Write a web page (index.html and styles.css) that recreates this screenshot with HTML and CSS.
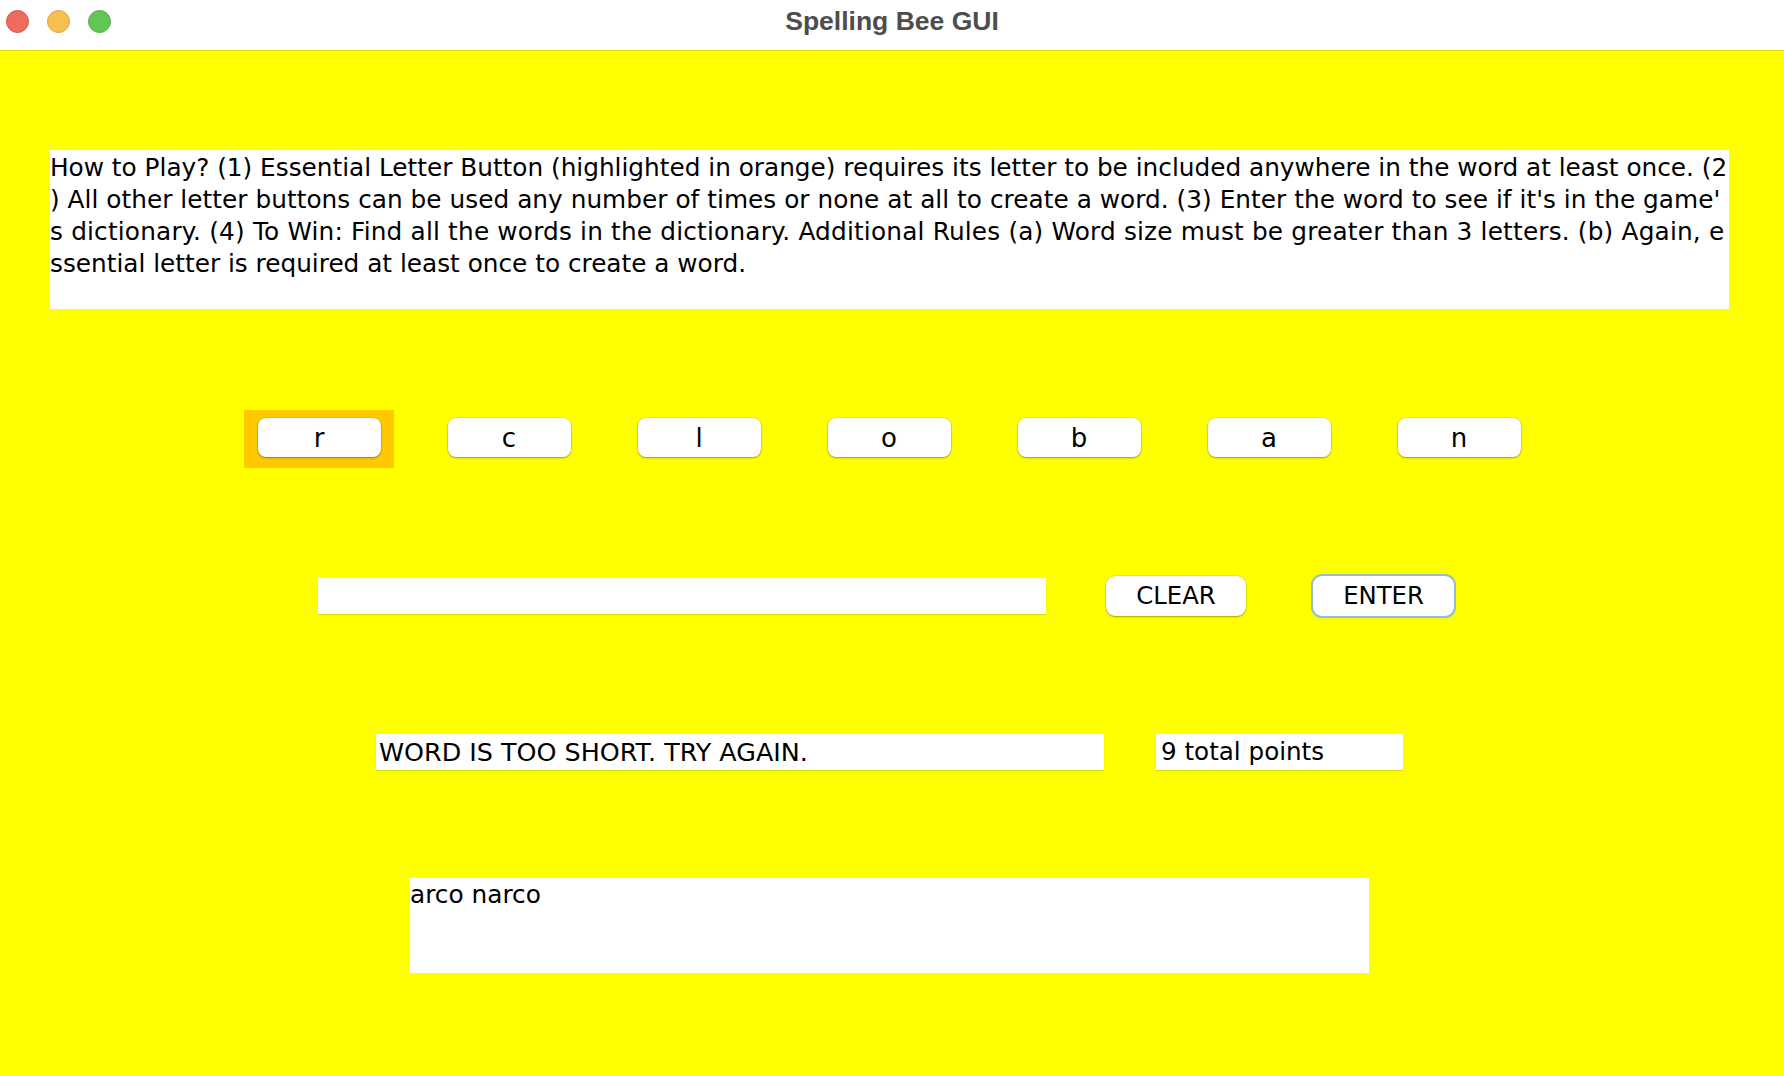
FILE: index.html
```html
<!DOCTYPE html>
<html lang="en">
<head>
<meta charset="utf-8">
<title>Spelling Bee GUI</title>
<link rel="stylesheet" href="styles.css">
</head>
<body>
<div class="window">
  <header class="titlebar">
    <div class="lights">
      <span class="light red"></span>
      <span class="light amber"></span>
      <span class="light green"></span>
    </div>
    <div class="title">Spelling Bee GUI</div>
    <div class="spacer"></div>
  </header>
  <main class="content">
    <div class="instructions">
      <div class="line">How to Play? (1) Essential Letter Button (highlighted in orange) requires its letter to be included anywhere in the word at least once. (2</div>
      <div class="line line-two">) All other letter buttons can be used any number of times or none at all to create a word. (3) Enter the word to see if it's in the game'</div>
      <div class="line line-three">s dictionary. (4) To Win: Find all the words in the dictionary. Additional Rules (a) Word size must be greater than 3 letters. (b) Again, e</div>
      <div class="line">ssential letter is required at least once to create a word.</div>
    </div>
    <div class="letters">
      <div class="slot essential"><button class="letter-btn">r</button></div>
      <div class="slot"><button class="letter-btn">c</button></div>
      <div class="slot"><button class="letter-btn">l</button></div>
      <div class="slot"><button class="letter-btn">o</button></div>
      <div class="slot"><button class="letter-btn">b</button></div>
      <div class="slot"><button class="letter-btn">a</button></div>
      <div class="slot"><button class="letter-btn">n</button></div>
    </div>
    <div class="entry-row">
      <div class="word-field"></div>
      <button class="action-btn clear">CLEAR</button>
      <button class="action-btn enter">ENTER</button>
    </div>
    <div class="status-row">
      <div class="status">WORD IS TOO SHORT. TRY AGAIN.</div>
      <div class="points">9 total points</div>
    </div>
    <div class="found-words">arco narco</div>
  </main>
</div>
</body>
</html>
```

FILE: styles.css
```css
html, body {
  margin: 0;
  padding: 0;
}

body {
  background: #ffff00;
  font-family: "DejaVu Sans", "Verdana", sans-serif;
  color: #000;
}

.window {
  width: 1784px;
  height: 1076px;
  overflow: hidden;
  display: flex;
  flex-direction: column;
}

.titlebar {
  height: 50px;
  flex: none;
  background: #ffffff;
  display: grid;
  grid-template-columns: 1fr auto 1fr;
  align-items: center;
}

.lights {
  display: flex;
  gap: 18px;
  padding-left: 6px;
  margin-bottom: 7px;
}

.light {
  width: 23px;
  height: 23px;
  border-radius: 50%;
  box-sizing: border-box;
}

.light.red {
  background: #ee6b60;
  border: 1px solid #d5544a;
}

.light.amber {
  background: #f6c050;
  border: 1px solid #dca446;
}

.light.green {
  background: #62c655;
  border: 1px solid #55ad48;
}

.title {
  font-family: "Liberation Sans", "Arial", sans-serif;
  font-weight: bold;
  font-size: 26.5px;
  color: #4d4d4d;
  margin-bottom: 8px;
}

.content {
  flex: 1;
  background: #ffff00;
  border-top: 1px solid #e2da00;
  padding-top: 99px;
}

.instructions {
  margin-left: 50px;
  width: 1679px;
  height: 159px;
  box-sizing: border-box;
  padding-top: 2px;
  background: #ffffff;
  font-size: 24.75px;
  line-height: 32px;
  overflow: hidden;
}

.line {
  white-space: pre;
  height: 32px;
}

.line-two {
  letter-spacing: 0.04px;
}

.line-three {
  letter-spacing: 0.19px;
}

.letters {
  display: flex;
  gap: 40px;
  margin-top: 101px;
  padding-left: 244px;
}

.slot {
  width: 150px;
  height: 58px;
  box-sizing: border-box;
  padding-top: 8px;
  display: flex;
  align-items: flex-start;
  justify-content: center;
}

.slot.essential {
  background: #ffc800;
}

.letter-btn {
  width: 123px;
  height: 39px;
  border: none;
  border-radius: 8px;
  background: #ffffff;
  box-shadow: 0 1px 2px rgba(0, 0, 0, 0.35), 0 0 0 0.5px rgba(0, 0, 0, 0.12);
  font-family: "DejaVu Sans", sans-serif;
  font-size: 26px;
  line-height: 1;
  color: #000;
  padding: 0;
}

.entry-row {
  display: flex;
  align-items: center;
  height: 40px;
  margin-top: 108px;
  padding-left: 318px;
}

.word-field {
  width: 728px;
  height: 36px;
  background: #ffffff;
  box-shadow: 0 1px 1px rgba(0, 0, 0, 0.14);
}

.action-btn {
  height: 40px;
  border: none;
  border-radius: 9px;
  background: #ffffff;
  box-shadow: 0 1px 2px rgba(0, 0, 0, 0.3), 0 0 0 0.5px rgba(0, 0, 0, 0.12);
  font-family: "DejaVu Sans", sans-serif;
  font-size: 24.3px;
  line-height: 1;
  color: #000;
  padding: 0;
}

.action-btn.clear {
  width: 140px;
  margin-left: 60px;
}

.action-btn.enter {
  width: 141px;
  margin-left: 67px;
  box-shadow: 0 0 0 2px #93bcd6, 0 1px 3px rgba(0, 0, 0, 0.25);
}

.status-row {
  display: flex;
  align-items: center;
  margin-top: 118px;
  padding-left: 376px;
}

.status {
  width: 728px;
  height: 36px;
  box-sizing: border-box;
  padding-left: 3px;
  background: #ffffff;
  box-shadow: 0 1px 1px rgba(0, 0, 0, 0.14);
  font-size: 25.4px;
  line-height: 36px;
  white-space: nowrap;
}

.points {
  width: 247px;
  height: 36px;
  box-sizing: border-box;
  padding-left: 5px;
  margin-left: 52px;
  background: #ffffff;
  box-shadow: 0 1px 1px rgba(0, 0, 0, 0.14);
  font-size: 24.6px;
  line-height: 36px;
  white-space: nowrap;
}

.found-words {
  margin-top: 108px;
  margin-left: 410px;
  width: 959px;
  height: 95px;
  background: #ffffff;
  font-size: 24.8px;
  line-height: 34px;
}
```
